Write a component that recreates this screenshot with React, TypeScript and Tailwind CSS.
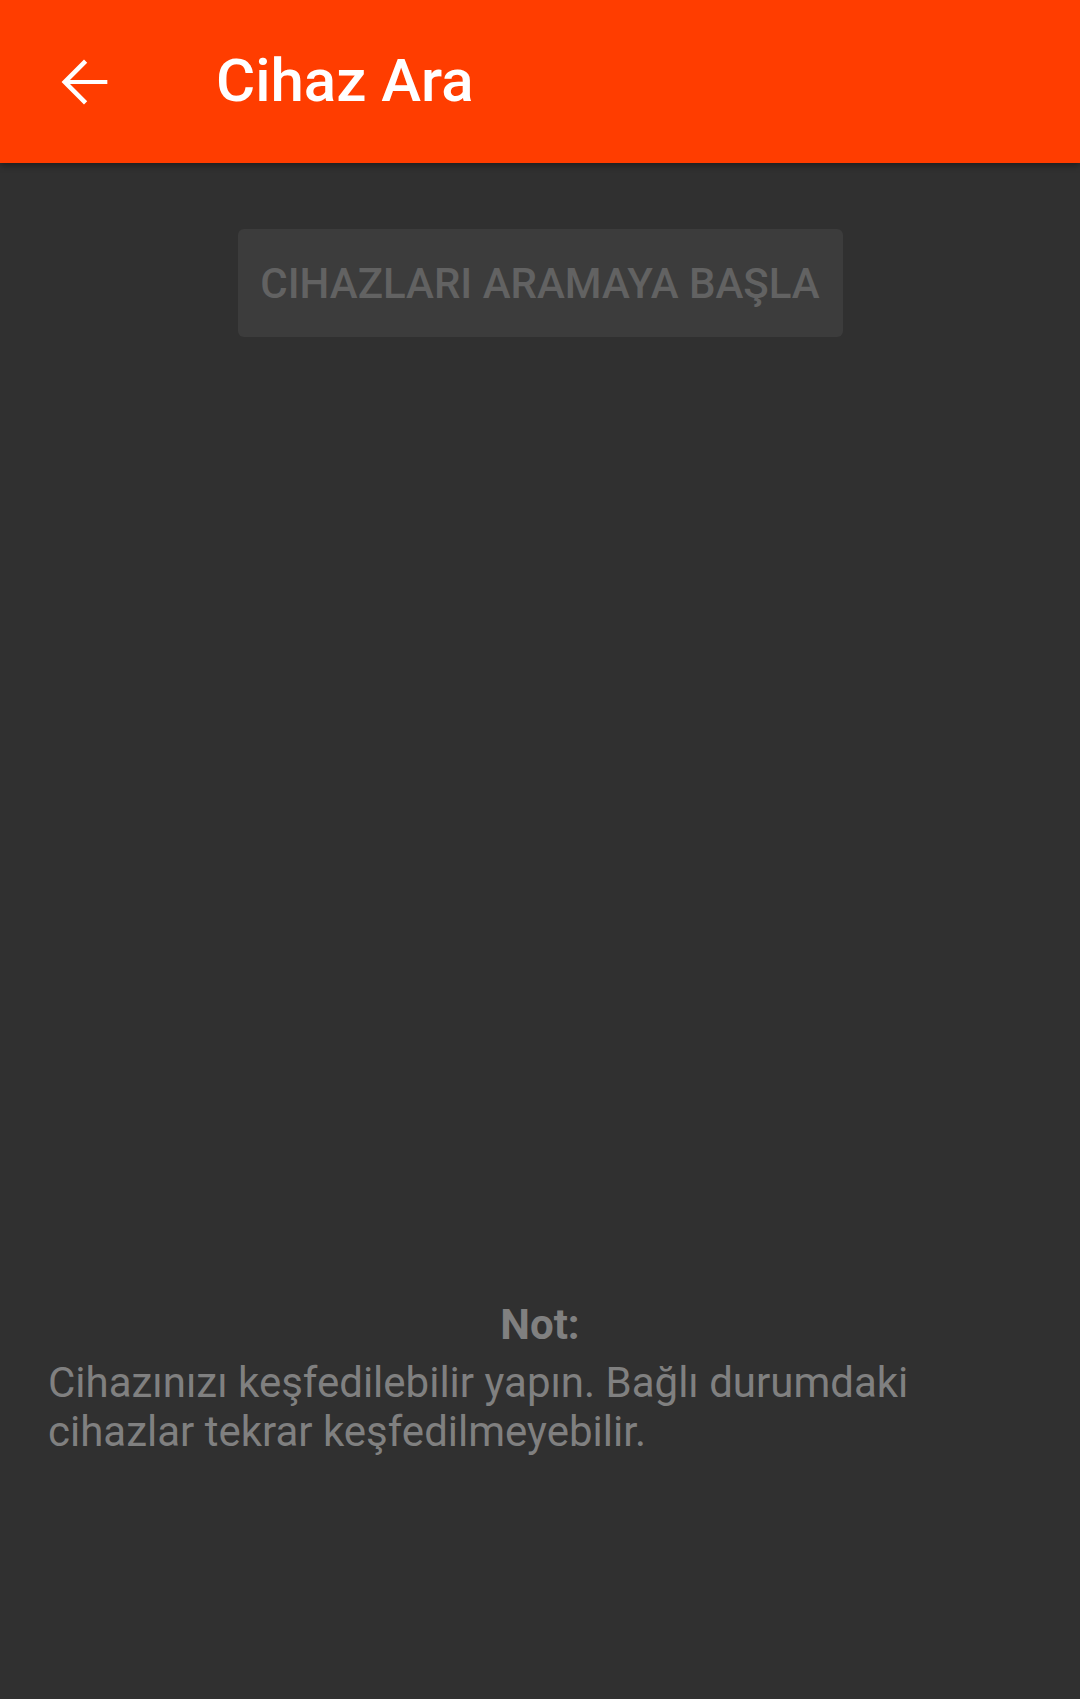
export default function App() {
  return (
    <div
      className="flex min-h-[1699px] w-[1080px] flex-col bg-[#303030]"
      style={{ fontFamily: 'Roboto, "Noto Sans", sans-serif' }}
    >
      {/* toolbar */}
      <header className="relative z-10 flex h-[163px] items-center bg-[#ff3d00] shadow-[0_3px_6px_rgba(0,0,0,0.35)]">
        <button className="ml-[49px] flex h-[70px] w-[70px] items-center justify-center">
          <svg viewBox="0 0 24 24" className="h-[70px] w-[70px]" fill="#ffffff">
            <path d="M20 11.3H7.2l5.9-5.9L12 4.3 4.3 12l7.7 7.7 1.1-1.1-5.9-5.9H20z" />
          </svg>
        </button>
        <h1 className="ml-[97px] mt-[-2px] text-[60px] font-medium leading-none text-white">
          Cihaz Ara
        </h1>
      </header>

      <div className="flex justify-center pt-[66px]">
        <button
          disabled
          className="flex h-[108px] w-[605px] items-center justify-center rounded-[6px] bg-[#3c3c3c] text-[42px] font-medium uppercase text-[#626262]"
        >
          CIHAZLARI ARAMAYA BAŞLA
        </button>
      </div>

      <div className="mt-[964px] px-[48px] text-[#808080]">
        <p className="text-center text-[42px] font-bold leading-[48px]">Not:</p>
        <p className="mt-[9px] text-[42px] leading-[49px]">
          Cihazınızı keşfedilebilir yapın. Bağlı durumdaki cihazlar tekrar keşfedilmeyebilir.
        </p>
      </div>
    </div>
  );
}
